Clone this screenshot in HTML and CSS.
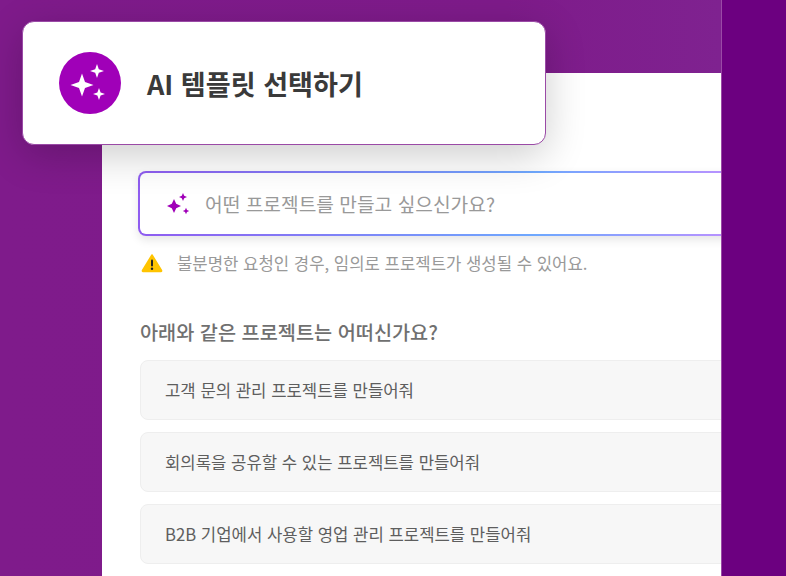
FILE: index.html
```html
<!DOCTYPE html>
<html lang="ko">
<head>
  <meta charset="UTF-8" />
  <meta name="viewport" content="width=device-width, initial-scale=1.0"/>
  <title>AI 템플릿 선택하기</title>
  <link rel="stylesheet" href="styles.css">
</head>
<body>
  <div class="stage">
    <div class="main">
      <div class="panel">
        <div class="prompt">
          <svg class="prompt-icon" viewBox="0 0 24 24" width="24" height="24">
            <path d="M7 7 L9.200 11.800 L14 14 L9.200 16.200 L7 21 L4.800 16.200 L0 14 L4.800 11.800 Z" fill="#a000b8"/>
            <path d="M16 1 L17.200 3.800 L20 5 L17.200 6.200 L16 9 L14.800 6.200 L12 5 L14.800 3.800 Z" fill="#a000b8"/>
            <path d="M19 15.800 L20 18 L22.200 19 L20 20 L19 22.200 L18 20 L15.800 19 L18 18 Z" fill="#a000b8"/>
          </svg>
          <span class="prompt-text">어떤 프로젝트를 만들고 싶으신가요?</span>
        </div>

        <div class="notice">
          <svg class="notice-icon" viewBox="0 0 22 20" width="22" height="20">
            <path d="M11 2 L20.500 17.500 Q20.800 18.500 20 18.500 L2 18.500 Q1.200 18.500 1.500 17.500 Z" fill="#ffc400" stroke="#ffc400" stroke-width="1.5" stroke-linejoin="round"/>
            <rect x="10" y="6.500" width="2" height="7" rx="1" fill="#222"/>
            <circle cx="11" cy="15.700" r="1.200" fill="#222"/>
          </svg>
          <span>불분명한 요청인 경우, 임의로 프로젝트가 생성될 수 있어요.</span>
        </div>

        <h2 class="suggest-title">아래와 같은 프로젝트는 어떠신가요?</h2>
        <div class="suggest-list">
          <div class="suggest">고객 문의 관리 프로젝트를 만들어줘</div>
          <div class="suggest">회의록을 공유할 수 있는 프로젝트를 만들어줘</div>
          <div class="suggest">B2B 기업에서 사용할 영업 관리 프로젝트를 만들어줘</div>
        </div>
      </div>
    </div>
    <div class="side"></div>

    <div class="title-card">
      <div class="title-badge">
        <svg viewBox="0 0 62 62" width="62" height="62">
          <path d="M23 21.500 L26 30 L34.500 33 L26 36 L23 44.500 L20 36 L11.500 33 L20 30 Z" fill="#fff"/>
          <path d="M38 12 L39.800 17.200 L45 19 L39.800 20.800 L38 26 L36.200 20.800 L31 19 L36.200 17.200 Z" fill="#fff"/>
          <path d="M40 36 L41.600 40.400 L46 42 L41.600 43.600 L40 48 L38.400 43.600 L34 42 L38.400 40.400 Z" fill="#fff"/>
        </svg>
      </div>
      <h1 class="title-text">AI 템플릿 선택하기</h1>
    </div>
  </div>
</body>
</html>
```

FILE: styles.css
```css
* {
  box-sizing: border-box;
}
body {
  margin: 0;
  font-family: 'Noto Sans CJK KR', 'Noto Sans', sans-serif;
  background-color: #6c0080;
}
.stage {
  position: relative;
  display: flex;
  height: 576px;
  overflow: hidden;
}
.main {
  width: 722px;
  padding: 73px 0 0 102px;
  background: linear-gradient(90deg, #7f1b8b 0%, #7e1b8a 70%, #7f2290 100%);
  border-right: 1px solid #9a4aa6;
  overflow: hidden;
}
.panel {
  height: 100%;
  padding: 98px 0 0 36px;
  background-color: #fff;
  overflow: hidden;
}
.side {
  flex: 1;
  background-color: #6c0080;
}

/* input */
.prompt {
  display: flex;
  align-items: center;
  gap: 14px;
  width: 640px;
  height: 65px;
  padding-left: 27px;
  border: 2px solid transparent;
  border-radius: 8px;
  background:
    linear-gradient(#fff, #fff) padding-box,
    linear-gradient(90deg, #8f5cf0 0%, #6ea8fe 62%, #cc8cff 100%) border-box;
  box-shadow: 0 4px 10px rgba(0,0,0,0.1);
}
.prompt-text {
  font-size: 19.2px;
  color: #999;
}

.notice {
  display: flex;
  align-items: center;
  gap: 14px;
  margin-top: 15px;
  padding-left: 3px;
  font-size: 16.7px;
  color: #999;
}

.suggest-title {
  margin: 43px 0 0 2px;
  font-size: 19.7px;
  font-weight: 500;
  line-height: 28px;
  color: #707070;
}
.suggest-list {
  display: flex;
  flex-direction: column;
  gap: 12px;
  margin: 14px 0 0 2px;
}
.suggest {
  display: flex;
  align-items: center;
  width: 640px;
  height: 60px;
  padding-left: 24px;
  border: 1px solid #eee;
  border-radius: 8px;
  background-color: #f7f7f7;
  font-size: 16.7px;
  color: #5e5e5e;
}

/* floating title */
.title-card {
  position: absolute;
  top: 21px;
  left: 22px;
  display: flex;
  align-items: center;
  gap: 25.500px;
  width: 524px;
  height: 124px;
  padding-left: 36.400px;
  border: 1px solid #9a4aa6;
  border-radius: 12px;
  background-color: #fff;
  box-shadow: 0 10px 40px rgba(0,0,0,0.2);
}
.title-badge {
  width: 62px;
  height: 62px;
  border-radius: 50%;
  background-color: #a000b8;
}
.title-text {
  margin: 0;
  font-size: 27.100px;
  font-weight: 700;
  color: #3a3a3a;
}
```
